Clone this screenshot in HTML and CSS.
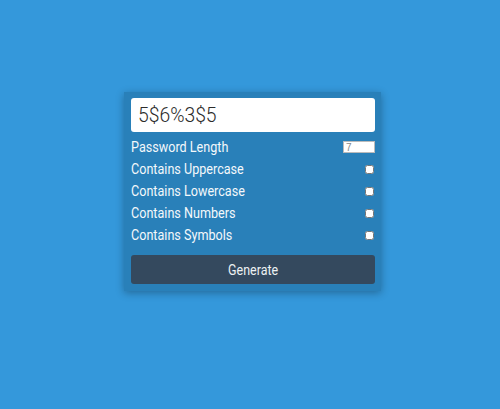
FILE: index.html
```html
<!DOCTYPE html>
<html>
<head>
<meta charset="utf-8">
<link rel="stylesheet" href="styles.css">
</head>
<body>
<div class="card">
  <div class="result"><span class="squeeze">5$6%3$5</span></div>
  <div class="row"><span class="squeeze">Password Length</span><input class="num" type="number" value="7"></div>
  <div class="row"><span class="squeeze">Contains Uppercase</span><input class="chk" type="checkbox"></div>
  <div class="row"><span class="squeeze">Contains Lowercase</span><input class="chk" type="checkbox"></div>
  <div class="row"><span class="squeeze">Contains Numbers</span><input class="chk" type="checkbox"></div>
  <div class="row"><span class="squeeze">Contains Symbols</span><input class="chk" type="checkbox"></div>
  <button class="btn"><span class="squeeze mid">Generate</span></button>
</div>
</body>
</html>
```

FILE: styles.css
```css
html, body {
  margin: 0;
  height: 100%;
}
body {
  background: #3498db;
  font-family: Roboto, "Liberation Sans", sans-serif;
  display: flex;
  justify-content: center;
  align-items: flex-start;
}
.card {
  margin-top: 92px;
  margin-left: 5px;
  width: 257px;
  box-sizing: border-box;
  padding: 6px 6px 7px 7px;
  background: #2980b9;
  box-shadow: 0 2px 8px rgba(0, 0, 0, 0.3);
  display: flex;
  flex-direction: column;
}
.squeeze {
  display: inline-block;
  transform: scaleX(0.9);
  transform-origin: left center;
  white-space: nowrap;
}
.squeeze.mid {
  transform: scaleX(0.83);
  transform-origin: center center;
}
.result {
  height: 34px;
  background: #fff;
  border-radius: 3px;
  color: #2b2b2b;
  font-size: 21px;
  font-weight: 300;
  display: flex;
  align-items: center;
  padding-left: 7px;
  margin-bottom: 4px;
}
.result .squeeze {
  transform: scaleX(0.92);
}
.row {
  height: 22px;
  display: flex;
  align-items: center;
  justify-content: space-between;
  color: #f4f8fb;
  font-size: 14px;
  font-weight: 400;
}
.num {
  width: 32px;
  height: 12px;
  box-sizing: border-box;
  border: 1px solid #bbb;
  padding: 0 2px;
  font-family: "Liberation Sans", sans-serif;
  font-size: 10px;
  color: #888;
  margin: 0;
  background: #fff;
}
.chk {
  width: 9px;
  height: 9px;
  margin: 0 1px 0 0;
}
.btn {
  margin-top: 9px;
  height: 29px;
  border: none;
  border-radius: 3px;
  background: #34495e;
  color: #edf1f3;
  font-family: Roboto, "Liberation Sans", sans-serif;
  font-weight: 400;
  font-size: 15px;
  padding: 0;
}
```
